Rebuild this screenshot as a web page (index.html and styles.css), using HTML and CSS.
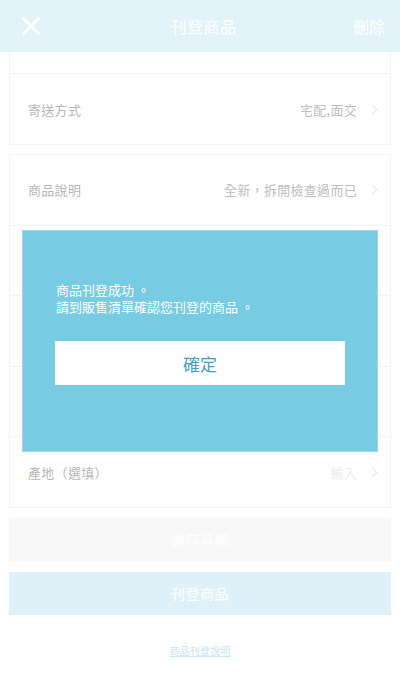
FILE: index.html
```html
<!DOCTYPE html>
<html lang="zh-Hant">
<head>
    <meta charset="UTF-8">
    <meta name="viewport" content="width=device-width, initial-scale=1.0">
    <title>刊登商品</title>
    <link rel="stylesheet" href="styles.css">
</head>
<body>
    <div class="header">
        <span class="close">
            <svg width="18" height="18" viewBox="0 0 18 18"><path d="M1.5 1.5L16.5 16.5M16.5 1.5L1.5 16.5" stroke="#fff" stroke-width="3" stroke-linecap="round"/></svg>
        </span>
        <div class="title">刊登商品</div>
        <span class="delete">刪除</span>
    </div>

    <div class="content">
        <div class="card">
            <div class="row row-cut"></div>
            <div class="row">
                <span class="label">寄送方式</span>
                <span class="value">宅配,面交</span>
                <span class="arrow"></span>
            </div>
        </div>

        <div class="card card-list">
            <div class="row">
                <span class="label">商品說明</span>
                <span class="value">全新，拆開檢查過而已</span>
                <span class="arrow"></span>
            </div>
            <!-- 被提示框遮住的欄位 -->
            <div class="row"></div>
            <div class="row"></div>
            <div class="row"></div>
            <div class="row">
                <span class="label">產地（選填）</span>
                <span class="value value-light">輸入</span>
                <span class="arrow"></span>
            </div>
        </div>

        <button class="btn btn-draft">儲存草稿</button>
        <button class="btn btn-publish">刊登商品</button>

        <a class="help" href="#">商品刊登說明</a>
    </div>

    <!-- 刊登成功提示 -->
    <div class="mask">
        <div class="dialog">
            <p class="dialog-text">商品刊登成功 。<br>請到販售清單確認您刊登的商品 。</p>
            <button class="dialog-btn">確定</button>
        </div>
    </div>
</body>
</html>
```

FILE: styles.css
```css
body {
    margin: 0;
    padding: 0;
    background: #fff;
    font-family: 'Noto Sans CJK TC', 'Noto Sans', sans-serif;
}

.header {
    height: 52px;
    background: #e1f3f9;
    display: grid;
    grid-template-columns: 1fr auto 1fr;
    align-items: center;
    padding: 0 15px 0 22px;
    color: #fff;
}

.close {
    width: 18px;
    height: 18px;
    display: flex;
}

.title {
    text-align: center;
    font-size: 16px;
    letter-spacing: 0.5px;
}

.delete {
    font-size: 16px;
    justify-self: end;
}

.content {
    padding: 0 9px;
    display: flex;
    flex-direction: column;
}

.card {
    border: 1px solid #f3f3f3;
    border-top: none;
    margin-bottom: 9px;
}

.card + .card {
    border-top: 1px solid #f3f3f3;
}

.row {
    height: 70px;
    display: flex;
    align-items: center;
    padding: 0 14px 0 18px;
    border-top: 1px solid #f3f3f3;
    font-size: 13px;
}

.card-list .row {
    height: 69.6px;
}

.row:first-child {
    border-top: none;
}

.row-cut {
    height: 21px;
}

.label {
    flex: 1;
    color: #b6b6b6;
    letter-spacing: 0.3px;
}

.value {
    color: #bdbdbd;
    letter-spacing: 0.3px;
}

.value-light {
    color: #ececec;
}

.arrow {
    width: 6px;
    height: 6px;
    border-top: 1px solid #e6e6e6;
    border-right: 1px solid #e6e6e6;
    transform: rotate(45deg);
    margin-left: 12px;
}

.btn {
    height: 43px;
    border: none;
    color: #fff;
    font-size: 14px;
    font-family: inherit;
    letter-spacing: 0.5px;
}

.btn-draft {
    background: #f8f8f8;
    margin-top: 1px;
}

.btn-publish {
    background: #def1f8;
    margin-top: 11px;
}

.help {
    align-self: center;
    margin-top: 28px;
    font-size: 10px;
    letter-spacing: 0.2px;
    color: #c6e5f0;
}

/* 提示框 */
.mask {
    position: fixed;
    top: 0;
    left: 0;
    width: 100%;
    height: 100%;
}

.dialog {
    position: absolute;
    left: 22px;
    top: 230px;
    width: 356px;
    height: 222px;
    box-sizing: border-box;
    background: #77cbe3;
    border: 1px solid #9fdaea;
    padding: 50px 32px 0;
}

.dialog-text {
    margin: 0 0 26px;
    color: #fff;
    font-size: 13px;
    line-height: 17px;
    padding-left: 1px;
}

.dialog-btn {
    width: 100%;
    height: 44px;
    border: none;
    background: #fff;
    color: #449fbd;
    font-size: 17px;
    font-family: inherit;
}
```
